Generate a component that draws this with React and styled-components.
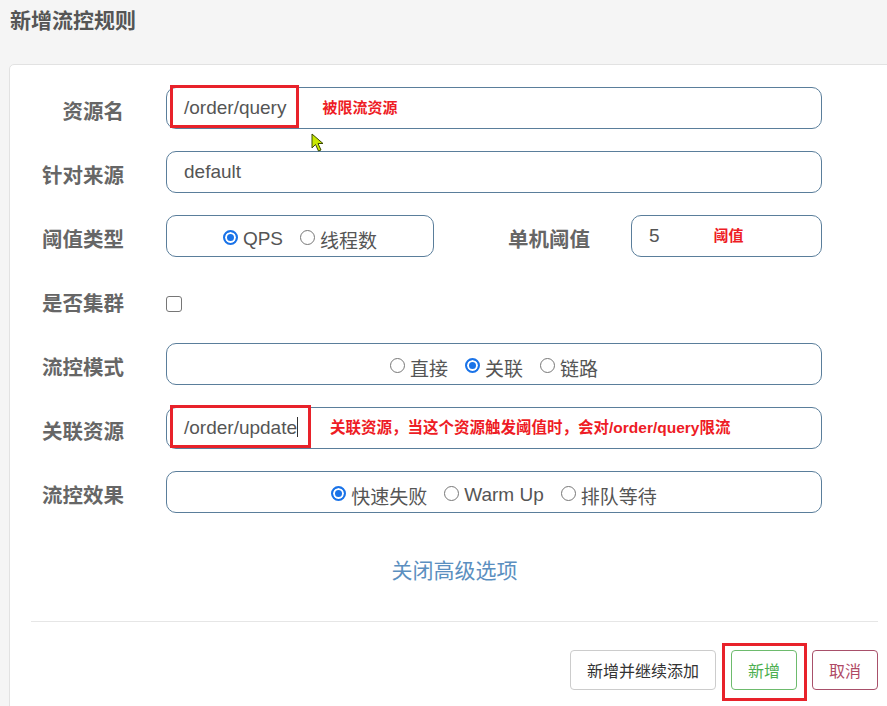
import React from 'react'
import styled, { createGlobalStyle } from 'styled-components'

const GlobalStyle = createGlobalStyle`
  html, body {
    margin: 0;
    padding: 0;
    background: #f5f5f5;
    overflow: hidden;
  }
  body {
    font-family: "Liberation Sans", "Noto Sans CJK SC", sans-serif;
    color: #555;
  }
`

const Page = styled.div`
  width: 887px;
  height: 706px;
  overflow: hidden;
`

const Title = styled.h3`
  margin: 0;
  height: 64px;
  padding: 8px 0 0 10px;
  box-sizing: border-box;
  font-size: 21px;
  line-height: 26px;
  font-weight: bold;
  color: #555;
`

const Card = styled.div`
  position: relative;
  margin-left: 9px;
  margin-right: -13px;
  height: 700px;
  background: #fff;
  border: 1px solid #e2e2e2;
  border-radius: 5px;
  padding-top: 22px;
  box-sizing: border-box;
`

const Form = styled.div`
  display: grid;
  grid-template-columns: 114px 656px;
  column-gap: 42px;
  row-gap: 22px;
  grid-auto-rows: 42px;
  align-items: center;
`

const Label = styled.label`
  text-align: right;
  font-size: 20.5px;
  font-weight: bold;
  color: #666;
  padding-top: 3px;
`

const Field = styled.div`
  display: flex;
  align-items: center;
  justify-content: ${p => (p.$center ? 'center' : 'flex-start')};
  height: 42px;
  width: ${p => p.$w || '100%'};
  box-sizing: border-box;
  border: 1px solid #5a7e9b;
  border-radius: 10px;
  padding-left: ${p => (p.$center ? '0' : '17px')};
  font-size: 19px;
  color: #555;
`

const Value = styled.span`
  position: relative;
  white-space: nowrap;
  &::before {
    content: '';
    display: ${p => (p.$marked ? 'block' : 'none')};
    position: absolute;
    top: -12px;
    bottom: -9px;
    left: -14px;
    right: -13px;
    border: 3px solid #e8222a;
  }
`

const Caret = styled.span`
  display: inline-block;
  width: 1px;
  height: 20px;
  background: #333;
  vertical-align: -3px;
`

const Note = styled.span`
  margin-left: ${p => p.$gap || 36}px;
  color: #ee1c25;
  font-size: ${p => p.$size || 15}px;
  font-weight: bold;
  white-space: nowrap;
  padding-bottom: 4px;
`

const SplitRow = styled.div`
  display: flex;
  align-items: center;
`

const SubLabel = styled(Label)`
  width: 156px;
  margin-right: 41px;
`

const Option = styled.span`
  display: inline-flex;
  align-items: center;
  margin-right: ${p => (p.$last ? 0 : 17)}px;
  padding-top: 6px;
  white-space: nowrap;
`

const Radio = styled.span`
  display: inline-block;
  width: 15px;
  height: 15px;
  margin-right: 5px;
  margin-top: -3px;
  border-radius: 50%;
  box-sizing: border-box;
  border: ${p => (p.$on ? '2px solid #1a73e8' : '1px solid #777')};
  background: ${p => (p.$on ? '#1a73e8' : '#fff')};
  box-shadow: ${p => (p.$on ? 'inset 0 0 0 2px #fff' : 'none')};
`

const Checkbox = styled.span`
  display: block;
  width: 16px;
  height: 16px;
  margin-top: 8px;
  box-sizing: border-box;
  border: 1.5px solid #767676;
  border-radius: 3px;
`

const Toggle = styled.div`
  margin-top: 43px;
  text-align: center;
  font-size: 21px;
  line-height: 30px;
  color: #5b8fc0;
`

const Divider = styled.hr`
  margin: 35px 21px 0 21px;
  border: 0;
  border-top: 1px solid #e6e6e6;
`

const Footer = styled.div`
  display: flex;
  justify-content: flex-end;
  gap: 15px;
  padding: 28px 21px 0;
`

const Button = styled.button`
  position: relative;
  height: 40px;
  padding: 0 16px;
  font-family: inherit;
  font-size: 16px;
  background: #fff;
  border-radius: 4px;
  border: 1px solid ${p => p.$border || '#ccc'};
  color: ${p => p.$color || '#333'};
  &::after {
    content: '';
    display: ${p => (p.$marked ? 'block' : 'none')};
    position: absolute;
    top: -8px;
    bottom: -12px;
    left: -10px;
    right: -11px;
    border: 3px solid #e8222a;
  }
`

const Pointer = styled.svg`
  position: absolute;
  left: 301px;
  top: 68px;
`

const RadioGroup = ({ items, value }) => (
  <>
    {items.map((t, i) => (
      <Option key={t} $last={i === items.length - 1}>
        <Radio $on={t === value} />
        {t}
      </Option>
    ))}
  </>
)

export default function App() {
  return (
    <Page>
      <GlobalStyle />
      <Title>新增流控规则</Title>
      <Card>
        <Form>
          <Label>资源名</Label>
          <Field>
            <Value $marked>/order/query</Value>
            <Note>被限流资源</Note>
          </Field>

          <Label>针对来源</Label>
          <Field>
            <Value>default</Value>
          </Field>

          <Label>阈值类型</Label>
          <SplitRow>
            <Field $center $w="268px">
              <RadioGroup items={['QPS', '线程数']} value="QPS" />
            </Field>
            <SubLabel>单机阈值</SubLabel>
            <Field $w="191px">
              <Value>5</Value>
              <Note $gap={54}>阈值</Note>
            </Field>
          </SplitRow>

          <Label>是否集群</Label>
          <div>
            <Checkbox />
          </div>

          <Label>流控模式</Label>
          <Field $center>
            <RadioGroup items={['直接', '关联', '链路']} value="关联" />
          </Field>

          <Label>关联资源</Label>
          <Field>
            <Value $marked>
              /order/update
              <Caret />
            </Value>
            <Note $gap={32} $size={15.5}>关联资源，当这个资源触发阈值时，会对/order/query限流</Note>
          </Field>

          <Label>流控效果</Label>
          <Field $center>
            <RadioGroup items={['快速失败', 'Warm Up', '排队等待']} value="快速失败" />
          </Field>
        </Form>

        <Toggle>关闭高级选项</Toggle>
        <Divider />
        <Footer>
          <Button>新增并继续添加</Button>
          <Button $marked $border="#6dbb6d" $color="#4caf50">新增</Button>
          <Button $border="#a8506a" $color="#b04a66">取消</Button>
        </Footer>

        <Pointer width="14" height="19" viewBox="0 0 14 19">
          <path d="M1 1 L1 15 L4.5 11.5 L7.5 18 L10 17 L7 10.5 L12 10.5 Z" fill="#c9e800" stroke="#3a4a00" strokeWidth="1" strokeLinejoin="round" />
        </Pointer>
      </Card>
    </Page>
  )
}
